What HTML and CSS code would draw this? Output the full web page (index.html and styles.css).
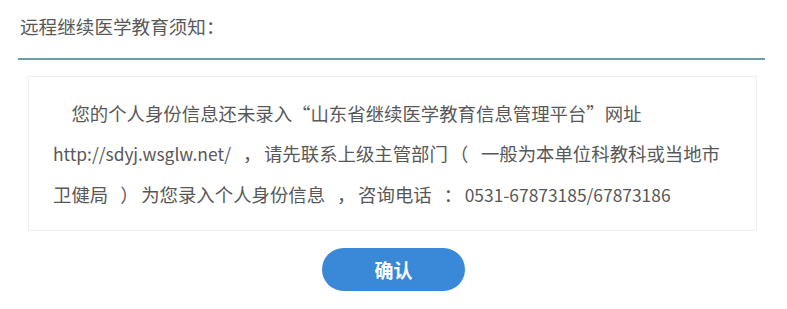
FILE: index.html
```html
<!DOCTYPE html>
<html lang="zh-CN">
<head>
<meta charset="utf-8">
<title>远程继续医学教育须知</title>
<link rel="stylesheet" href="styles.css">
</head>
<body>
<div class="dialog">
  <div class="header">
    <h1 class="title">远程继续医学教育须知：</h1>
  </div>
  <div class="notice">
    <p class="notice-text">您的个人身份信息还未录入“山东省继续医学教育信息管理平台”网址<br><span class="latin">http://sdyj.wsglw.net/</span><span class="punc punc-l">，</span>请先联系上级主管部门<span class="punc punc-r">（</span>一般为本单位科教科或当地市<br>卫健局<span class="punc punc-l">）</span>为您录入个人身份信息<span class="punc punc-l">，</span>咨询电话<span class="punc punc-l">：</span><span class="latin">0531-67873185/67873186</span></p>
  </div>
  <div class="actions">
    <button class="btn-confirm" type="button">确认</button>
  </div>
</div>
</body>
</html>
```

FILE: styles.css
```css
html, body {
  margin: 0;
  padding: 0;
  background: #ffffff;
}

body {
  font-family: "Noto Sans CJK SC", "Noto Sans", sans-serif;
  color: #555555;
}

.dialog {
  width: 787px;
  height: 309px;
  box-sizing: border-box;
  padding: 12px 22px 0 18px;
}

.header {
  padding: 0 0 18px 2px;
  border-bottom: 2px solid #6a9fa8;
}

.title {
  margin: 0;
  font-size: 18.6px;
  font-weight: normal;
  line-height: 28px;
  color: #585858;
}

.notice {
  margin: 16px 8px 0 10px;
  border: 1px solid #efefef;
  padding: 16px 20px 15px 24px;
}

.notice-text {
  margin: 0;
  font-size: 18.4px;
  line-height: 40px;
  text-indent: 1em;
  color: #585858;
  white-space: nowrap;
}

.latin {
  font-size: 17.4px;
}

.punc {
  display: inline-block;
  box-sizing: border-box;
  width: 33px;
  text-align: left;
  text-indent: 0;
}

.punc-l {
  padding-left: 12px;
}

.punc-r {
  padding-left: 2px;
}

.actions {
  display: flex;
  justify-content: center;
  padding-top: 17px;
  padding-left: 4px;
}

.btn-confirm {
  width: 143px;
  height: 43px;
  border: none;
  border-radius: 22px;
  background: #3a89d8;
  color: #ffffff;
  font-family: "Noto Sans CJK SC", sans-serif;
  font-size: 19px;
  font-weight: bold;
  cursor: pointer;
}
```
